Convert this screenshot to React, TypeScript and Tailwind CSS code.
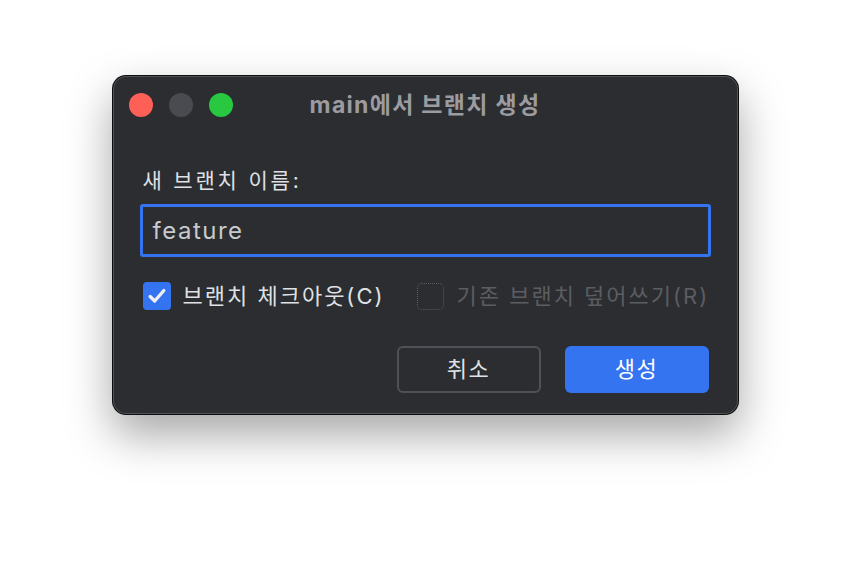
import React from "react";

const font = { fontFamily: 'Inter, "Noto Sans CJK KR", "Noto Sans", sans-serif' };

const TrafficLights = () => (
    <div className="absolute left-[16px] top-[17px] flex gap-[16px]">
        <span className="h-[24px] w-[24px] rounded-full bg-[#fe5f57]" />
        <span className="h-[24px] w-[24px] rounded-full bg-[#4a4b50]" />
        <span className="h-[24px] w-[24px] rounded-full bg-[#28c840]" />
    </div>
);

const CheckIcon = () => (
    <svg viewBox="0 0 24 24" className="h-[22px] w-[22px]" fill="none">
        <path
            d="M4.5 12.5l5 5L19.5 6"
            stroke="#eef0f3"
            strokeWidth="3.6"
            strokeLinecap="round"
            strokeLinejoin="round"
        />
    </svg>
);

export default function App() {
    return (
        <div className="flex h-[564px] w-[850px] justify-center bg-white pt-[75px]" style={font}>
            <div className="relative h-[340px] w-[627px] rounded-[14px] border border-black/70 bg-[#2b2d30] shadow-[0_20px_45px_rgba(0,0,0,0.35),inset_0_0_0_1px_rgba(255,255,255,0.18)]">
                {/* Title bar */}
                <div className="relative flex h-[58px] items-center justify-center">
                    <TrafficLights />
                    <span className="text-[23px] font-bold tracking-[1.3px] text-[#9c9ca0]">main에서 브랜치 생성</span>
                </div>

                <div className="px-[27px] pt-[33px]">
                    <div className="pl-[3px] text-[21px] leading-[28px] tracking-[2.8px] text-[#dfe1e5]">새 브랜치 이름:</div>

                    {/* Input */}
                    <div className="mt-[9px] flex h-[53px] items-center rounded-[3px] border-[3px] border-[#3574f0] px-[10px]">
                        <span className="text-[24px] tracking-[1.5px] text-[#c9cacd]">feature</span>
                    </div>

                    {/* Options */}
                    <div className="mt-[25px] flex h-[28px] items-center whitespace-nowrap pl-[3px]">
                        <span className="flex h-[28px] w-[28px] shrink-0 items-center justify-center rounded-[4px] bg-[#3574f0]">
                            <CheckIcon />
                        </span>
                        <span className="ml-[12px] shrink-0 text-[22px] tracking-[2px] text-[#dfe1e5]">브랜치 체크아웃(C)</span>
                        <span className="ml-[32px] h-[27px] w-[27px] shrink-0 rounded-[5px] border border-dotted border-[#5a5c61]" />
                        <span className="ml-[13px] shrink-0 text-[22px] tracking-[2px] text-[#5b5d62]">기존 브랜치 덮어쓰기(R)</span>
                    </div>

                    {/* Buttons */}
                    <div className="mt-[36px] flex justify-end gap-[24px] pr-[2px]">
                        <button className="flex h-[47px] w-[144px] items-center justify-center rounded-[6px] border-[2px] border-[#4e5157] text-[22px] tracking-[1.5px] text-[#dfe1e5]">
                            취소
                        </button>
                        <button className="flex h-[47px] w-[144px] items-center justify-center rounded-[6px] bg-[#3574f0] text-[22px] tracking-[1.5px] text-white">
                            생성
                        </button>
                    </div>
                </div>
            </div>
        </div>
    );
}
